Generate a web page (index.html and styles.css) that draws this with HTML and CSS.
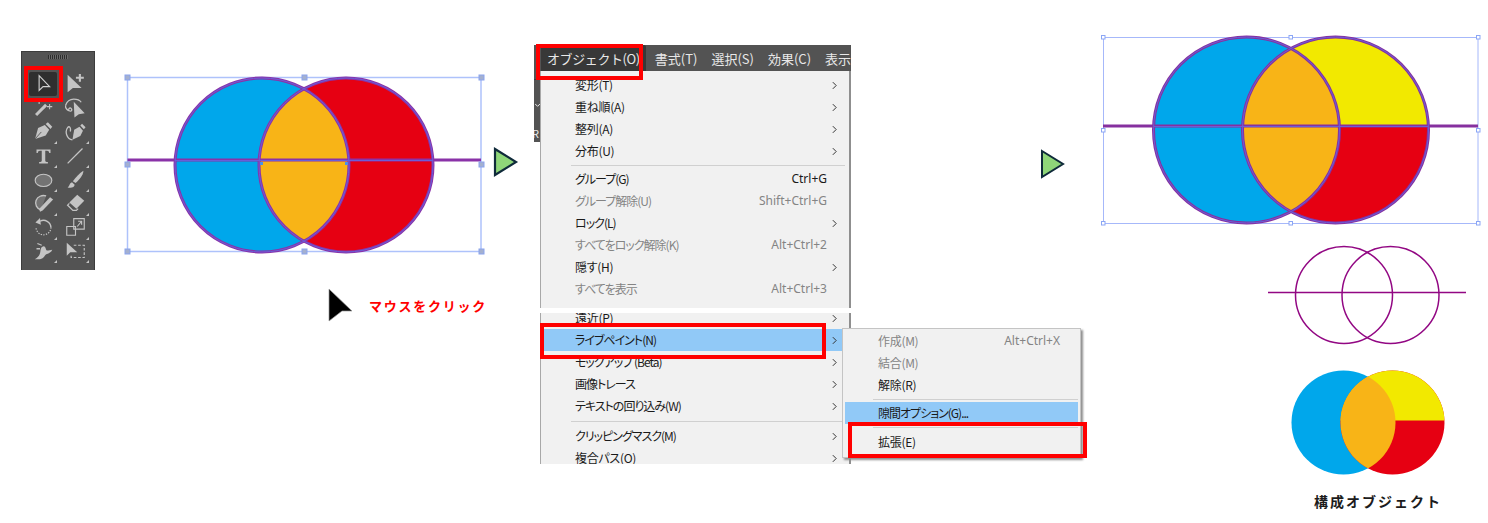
FILE: index.html
```html
<!DOCTYPE html>
<html lang="ja">
<head>
<meta charset="utf-8">
<title>ライブペイント 拡張</title>
<link rel="stylesheet" href="styles.css">
</head>
<body>
<main class="stage">

  <!-- Tools panel -->
  <section class="tools">
    <div class="grip"></div>
    <div class="tool-grid">
      <div class="tool tool-on"><svg viewBox="0 0 24 24"><path d="M7 3v17l4.500-4.500h7.500z" fill="none" stroke="#d0d0d0" stroke-width="1.300"/></svg></div>
      <div class="tool"><svg viewBox="0 0 24 24"><path d="M3 2v20l6-5h10z" fill="#c4c4c4"/><path d="M17 1v9M12.500 5.500h9" stroke="#c4c4c4" stroke-width="2.400"/></svg></div>
      <div class="tool"><svg viewBox="0 0 24 24"><path d="M3.500 20.500L15 9" stroke="#c4c4c4" stroke-width="3.400"/><path d="M7 2v6M4 5h6M19 8v6M16 11h6" stroke="#c4c4c4" stroke-width="1.200"/></svg></div>
      <div class="tool"><svg viewBox="0 0 24 24"><path d="M10 5.500L22.500 18.500l-6.700 1.200-5 3.800z" fill="#c4c4c4"/><path d="M.5 10C2 5 6 2.400 10 2.400s7 1.300 8.500 3.600" fill="none" stroke="#c4c4c4" stroke-width="1.500"/><path d="M.5 10c0 3 2 5 5 6 2 .7 3-1.500 1.500-3-1-1-3-.2-2.500 1.500" fill="none" stroke="#c4c4c4" stroke-width="1.500"/></svg></div>
      <div class="tool corner"><svg viewBox="0 0 24 24"><path d="M2.400 20.500L5.800 8l7.700-3.500 5 5.500-4 6.500z" fill="#c4c4c4"/><path d="M14.500 3.500L17 1.500l5 5-2 2.500z" fill="#c4c4c4"/><path d="M2.400 20.500L9.500 12.500" stroke="#535353" stroke-width="1"/></svg></div>
      <div class="tool corner"><svg viewBox="0 0 24 24"><path d="M8.500 21.500L10.500 10l6-3.500 4 4.500-3 6z" fill="#c4c4c4"/><path d="M17.500 5L19.500 3 23.500 7l-2 2.500z" fill="#c4c4c4"/><path d="M8.500 21.500C2 21 -.5 12 3 7.500 5 5 7 8 6 12" fill="none" stroke="#c4c4c4" stroke-width="1.500"/></svg></div>
      <div class="tool corner"><svg viewBox="0 0 24 24"><path d="M4 5h16v4h-1.500c0-2-1-2.500-4.500-2.500V18c0 1 1 1.500 3 1.500V21H7v-1.500c2 0 3-.5 3-1.500V6.500c-3.500 0-4.500.5-4.500 2.500H4z" fill="#c4c4c4"/></svg></div>
      <div class="tool corner"><svg viewBox="0 0 24 24"><path d="M3 21L20 4" stroke="#c4c4c4" stroke-width="1.500"/></svg></div>
      <div class="tool corner"><svg viewBox="0 0 24 24"><ellipse cx="12" cy="13" rx="9.500" ry="7" fill="#737373" stroke="#c4c4c4" stroke-width="1.300"/></svg></div>
      <div class="tool corner"><svg viewBox="0 0 24 24"><path d="M21 2c0 5-5 11-9 14l-3-2C12 10 16 5 21 2z" fill="#c4c4c4"/><path d="M8 15l3 3c0 3-4 4-8 3 2-1 2-5 5-6z" fill="#c4c4c4"/></svg></div>
      <div class="tool corner"><svg viewBox="0 0 24 24"><path d="M9 20.500A8.500 8 0 1 1 15 4.500" fill="#737373" stroke="#c4c4c4" stroke-width="1.500"/><path d="M23 8.500L11 21l-3 1.500-1-3L19.500 6z" fill="#c4c4c4"/></svg></div>
      <div class="tool corner"><svg viewBox="0 0 24 24"><path d="M14 3l8 7-9 9-8-7z" fill="#c4c4c4"/><path d="M5 13l-2 2 6 6h4l2-2" fill="none" stroke="#c4c4c4" stroke-width="1.500"/></svg></div>
      <div class="tool corner"><svg viewBox="0 0 24 24"><path d="M8 6A8.500 8.500 0 0 1 20.500 13" fill="none" stroke="#c4c4c4" stroke-width="1.600"/><path d="M20.500 13A8.500 8.500 0 1 1 3.500 13" fill="none" stroke="#c4c4c4" stroke-width="1.400" stroke-dasharray="1.500 1.500"/><path d="M8 2.400L2.800 7.400 9 10z" fill="#c4c4c4"/></svg></div>
      <div class="tool corner"><svg viewBox="0 0 24 24"><path d="M10 3h12v12H10zM2 12h10v10H2z" fill="none" stroke="#c4c4c4" stroke-width="1.300"/><path d="M14 12l5-6M15 6h4v4" fill="none" stroke="#c4c4c4" stroke-width="1.300"/></svg></div>
      <div class="tool corner"><svg viewBox="0 0 24 24"><path d="M2 22c3-2 5-3 6-7 1-3 0-7 4-8 3 0 2 4 4 5 2 0 4-1 6-1-1 3-4 4-6 5-3 1-3 5-8 6z" fill="#c4c4c4"/><path d="M5 4l5 2M4 10h4" stroke="#c4c4c4" stroke-width="1.500"/></svg></div>
      <div class="tool corner"><svg viewBox="0 0 24 24"><path d="M2 3v15l4-4h8z" fill="#c4c4c4"/><path d="M10 6h12v14H7v-4" fill="none" stroke="#c4c4c4" stroke-width="1.300" stroke-dasharray="3 2"/></svg></div>
    </div>
  </section>
  <div class="mark mark-tool"></div>

  <!-- Selected artwork -->
  <svg class="art art-one" viewBox="120 70 370 190">
    <defs>
      <clipPath id="oneL"><circle cx="262" cy="165" r="87"/></clipPath>
    </defs>
    <rect x="127.500" y="77.500" width="353.500" height="174" fill="none" stroke="#aec2fb" stroke-width="1.500"/>
    <circle cx="262" cy="165" r="87" fill="#00a7eb"/>
    <circle cx="346" cy="165" r="87" fill="#e60012"/>
    <circle cx="346" cy="165" r="87" fill="#f8b417" clip-path="url(#oneL)"/>
    <g fill="none" stroke="#8a32a8" stroke-width="3">
      <circle cx="262" cy="165" r="87"/><circle cx="346" cy="165" r="87"/>
      <path d="M127.500 160H481"/>
    </g>
    <g fill="none" stroke="#6a5ed8" stroke-width="1">
      <circle cx="262" cy="165" r="87"/><circle cx="346" cy="165" r="87"/>
      <path d="M175 160.500H433"/>
    </g>
    <g fill="#a4b0cf" stroke="#8aa4ee" stroke-width="1">
      <rect x="125" y="75" width="5" height="5"/><rect x="302" y="75" width="5" height="5"/><rect x="479" y="75" width="5" height="5"/>
      <rect x="125" y="162" width="5" height="5"/><rect x="479" y="162" width="5" height="5"/>
      <rect x="125" y="249" width="5" height="5"/><rect x="302" y="249" width="5" height="5"/><rect x="479" y="249" width="5" height="5"/>
    </g>
    <rect x="260" y="162" width="3" height="3" fill="#4a90ea"/>
    <rect x="345" y="162" width="3" height="3" fill="#4a90ea"/>
  </svg>

  <svg class="art art-cursor" viewBox="0 0 25 34"><path d="M1 1l23 22h-10l-13 10z" fill="#000" stroke="#9a9a9a" stroke-width=".7"/></svg>
  <p class="click-label">マウスをクリック</p>

  <svg class="art art-arrow-a" viewBox="0 0 26 32"><path d="M2 3l21 13L2 29z" fill="#8fd679" stroke="#0f2a3a" stroke-width="2.200"/></svg>

  <!-- Application menu -->
  <section class="app">
    <nav class="menubar">
      <span class="menubar-item menubar-on">オブジェクト(O)</span>
      <span class="menubar-item">書式(T)</span>
      <span class="menubar-item">選択(S)</span>
      <span class="menubar-item">効果(C)</span>
      <span class="menubar-item">表示</span>
    </nav>
    <div class="app-body">
      <span class="app-line"></span>
      <svg class="app-check" viewBox="0 0 7 6"><path d="M0 1l3 3 3-3"/></svg>
      <span class="app-glyph">R</span>
    </div>
  </section>

  <div class="menu">
    <div class="panel panel-top">
      <div class="row"><span class="label">変形(T)</span><span class="more"><svg viewBox="0 0 6 10"><path d="M1 1l4 4-4 4"/></svg></span></div>
      <div class="row"><span class="label">重ね順(A)</span><span class="more"><svg viewBox="0 0 6 10"><path d="M1 1l4 4-4 4"/></svg></span></div>
      <div class="row"><span class="label">整列(A)</span><span class="more"><svg viewBox="0 0 6 10"><path d="M1 1l4 4-4 4"/></svg></span></div>
      <div class="row"><span class="label">分布(U)</span><span class="more"><svg viewBox="0 0 6 10"><path d="M1 1l4 4-4 4"/></svg></span></div>
      <div class="sep"></div>
      <div class="row kana"><span class="label">グループ(G)</span><span class="key">Ctrl+G</span><span class="more"></span></div>
      <div class="row kana off"><span class="label">グループ解除(U)</span><span class="key">Shift+Ctrl+G</span><span class="more"></span></div>
      <div class="row kana"><span class="label">ロック(L)</span><span class="more"><svg viewBox="0 0 6 10"><path d="M1 1l4 4-4 4"/></svg></span></div>
      <div class="row kana off"><span class="label">すべてをロック解除(K)</span><span class="key">Alt+Ctrl+2</span><span class="more"></span></div>
      <div class="row"><span class="label">隠す(H)</span><span class="more"><svg viewBox="0 0 6 10"><path d="M1 1l4 4-4 4"/></svg></span></div>
      <div class="row kana off"><span class="label">すべてを表示</span><span class="key">Alt+Ctrl+3</span><span class="more"></span></div>
    </div>
    <div class="panel panel-bottom">
      <div class="row"><span class="label">遠近(P)</span><span class="more"><svg viewBox="0 0 6 10"><path d="M1 1l4 4-4 4"/></svg></span></div>
      <div class="row kana hot"><span class="label">ライブペイント(N)</span><span class="more"><svg viewBox="0 0 6 10"><path d="M1 1l4 4-4 4"/></svg></span></div>
      <div class="row kana"><span class="label">モックアップ (Beta)</span><span class="more"><svg viewBox="0 0 6 10"><path d="M1 1l4 4-4 4"/></svg></span></div>
      <div class="row kana"><span class="label">画像トレース</span><span class="more"><svg viewBox="0 0 6 10"><path d="M1 1l4 4-4 4"/></svg></span></div>
      <div class="row kana"><span class="label">テキストの回り込み(W)</span><span class="more"><svg viewBox="0 0 6 10"><path d="M1 1l4 4-4 4"/></svg></span></div>
      <div class="sep sep-wide"></div>
      <div class="row kana"><span class="label">クリッピングマスク(M)</span><span class="more"><svg viewBox="0 0 6 10"><path d="M1 1l4 4-4 4"/></svg></span></div>
      <div class="row"><span class="label">複合パス(O)</span><span class="more"><svg viewBox="0 0 6 10"><path d="M1 1l4 4-4 4"/></svg></span></div>
    </div>
  </div>

  <div class="submenu">
    <div class="row off"><span class="label">作成(M)</span><span class="key">Alt+Ctrl+X</span></div>
    <div class="row off"><span class="label">結合(M)</span></div>
    <div class="row"><span class="label">解除(R)</span></div>
    <div class="sep"></div>
    <div class="row kana hot"><span class="label">隙間オプション(G)...</span></div>
    <div class="sep sep-wide"></div>
    <div class="row"><span class="label">拡張(E)</span></div>
  </div>

  <div class="mark mark-object"></div>
  <div class="mark mark-live"></div>
  <div class="mark mark-expand"></div>

  <svg class="art art-arrow-b" viewBox="0 0 26 32"><path d="M2 3l21 13L2 29z" fill="#8fd679" stroke="#0f2a3a" stroke-width="2"/></svg>

  <!-- Result artwork -->
  <svg class="art art-two" viewBox="1095 30 390 200">
    <defs>
      <clipPath id="twoL"><circle cx="1246.500" cy="130" r="93"/></clipPath>
      <clipPath id="twoTop"><rect x="1095" y="30" width="390" height="96"/></clipPath>
    </defs>
    <rect x="1103.500" y="37.500" width="374.500" height="186" fill="none" stroke="#a6b8fa" stroke-width="1"/>
    <circle cx="1246.500" cy="130" r="93" fill="#00a7eb"/>
    <circle cx="1335.500" cy="130" r="93" fill="#e60012"/>
    <circle cx="1335.500" cy="130" r="93" fill="#f2e900" clip-path="url(#twoTop)"/>
    <circle cx="1335.500" cy="130" r="93" fill="#f8b417" clip-path="url(#twoL)"/>
    <g fill="none" stroke="#86309f" stroke-width="3">
      <circle cx="1246.500" cy="130" r="93"/><circle cx="1335.500" cy="130" r="93"/>
      <path d="M1103 126H1478"/>
    </g>
    <g fill="none" stroke="#6a5ed8" stroke-width="1">
      <circle cx="1246.500" cy="130" r="93"/><circle cx="1335.500" cy="130" r="93"/>
      <path d="M1154 126.500H1428"/>
    </g>
    <g fill="#fff" stroke="#8ba6f5" stroke-width="1">
      <rect x="1101.500" y="35.500" width="3.500" height="3.500"/><rect x="1289" y="35.500" width="3.500" height="3.500"/><rect x="1476.500" y="35.500" width="3.500" height="3.500"/>
      <rect x="1101.500" y="128.500" width="3.500" height="3.500"/><rect x="1476.500" y="128.500" width="3.500" height="3.500"/>
      <rect x="1101.500" y="221.500" width="3.500" height="3.500"/><rect x="1289" y="221.500" width="3.500" height="3.500"/><rect x="1476.500" y="221.500" width="3.500" height="3.500"/>
    </g>
  </svg>

  <svg class="art art-lines" viewBox="1260 240 215 110">
    <g fill="none" stroke="#920783" stroke-width="1.500">
      <circle cx="1344" cy="295" r="48.500"/><circle cx="1390.500" cy="295" r="48.500"/>
      <path d="M1268 292.500H1466"/>
    </g>
  </svg>

  <svg class="art art-fills" viewBox="1285 365 165 115">
    <defs>
      <clipPath id="fillL"><circle cx="1343.500" cy="422.500" r="52"/></clipPath>
      <clipPath id="fillTop"><rect x="1285" y="365" width="165" height="55.500"/></clipPath>
    </defs>
    <circle cx="1343.500" cy="422.500" r="52" fill="#00a7eb"/>
    <circle cx="1392.500" cy="422.500" r="52" fill="#e60012"/>
    <circle cx="1392.500" cy="422.500" r="52" fill="#f2e900" clip-path="url(#fillTop)"/>
    <circle cx="1392.500" cy="422.500" r="52" fill="#f8b417" clip-path="url(#fillL)"/>
  </svg>

  <p class="parts-label">構成オブジェクト</p>
</main>
</body>
</html>
```

FILE: styles.css
```css
* { box-sizing: border-box; }

html, body {
  margin: 0;
  padding: 0;
  background: #fff;
}

.stage {
  position: relative;
  width: 1488px;
  height: 523px;
  overflow: hidden;
  font-family: "Noto Sans CJK JP", "Noto Sans", sans-serif;
}

.art {
  position: absolute;
  display: block;
}

.art-one { left: 120px; top: 70px; width: 370px; height: 190px; }
.art-two { left: 1095px; top: 30px; width: 390px; height: 200px; }
.art-lines { left: 1260px; top: 240px; width: 215px; height: 110px; }
.art-fills { left: 1285px; top: 365px; width: 165px; height: 115px; }
.art-cursor { left: 328px; top: 288px; width: 25px; height: 34px; }
.art-arrow-a { left: 493px; top: 146px; width: 26px; height: 32px; }
.art-arrow-b { left: 1040px; top: 148px; width: 26px; height: 32px; }

.click-label {
  position: absolute;
  left: 369px;
  top: 296px;
  margin: 0;
  font-size: 13px;
  line-height: 20px;
  font-weight: 700;
  letter-spacing: 1.750px;
  color: #f00;
}

.parts-label {
  position: absolute;
  left: 1314px;
  top: 490px;
  margin: 0;
  font-size: 14px;
  line-height: 22px;
  font-weight: 700;
  letter-spacing: 2px;
  color: #1c1c1c;
}

/* Tools panel */
.tools {
  position: absolute;
  left: 21px;
  top: 51px;
  width: 74px;
  height: 219px;
  background: #535353;
  border: 1px solid #3c3c3c;
  border-bottom: 0;
  padding: 3px 0 0 6px;
  overflow: hidden;
}

.grip {
  width: 20px;
  height: 4px;
  margin: 0 0 13px 20px;
  background: repeating-linear-gradient(90deg, #2d2d2d 0 1px, #6a6a6a 1px 2px);
}

.tool-grid {
  display: grid;
  grid-template-columns: 30px 30px;
  grid-auto-rows: 23.800px;
  column-gap: 2px;
}

.tool {
  position: relative;
  display: flex;
  align-items: center;
  justify-content: center;
}

.tool svg {
  width: 21px;
  height: 21px;
  display: block;
}

.tool-on {
  background: #2f2f2f;
  border-radius: 2px;
  width: 28px;
  margin-left: 1px;
}

.corner::after {
  content: "";
  position: absolute;
  right: 1px;
  bottom: -1px;
  border-style: solid;
  border-width: 0 0 3px 3px;
  border-color: transparent transparent #c4c4c4 transparent;
}

/* Application window behind the menu */
.app {
  position: absolute;
  left: 534px;
  top: 45px;
  width: 317px;
  height: 97px;
  background: #535353;
  overflow: hidden;
}

.menubar {
  display: flex;
  height: 26px;
  padding-left: 7px;
  font-size: 13px;
  line-height: 28px;
  color: #e8e8e8;
  white-space: nowrap;
}

.menubar-item {
  padding: 0 6px;
  margin-right: 2px;
  flex: none;
}

.menubar-on {
  background: #383838;
  border-radius: 2px 2px 0 0;
  margin-right: 3px;
  letter-spacing: -.400px;
}

.app-body {
  position: relative;
  height: 71px;
}

.app-line {
  display: block;
  height: 1px;
  margin-top: 8px;
  background: #3d3d3d;
}

.app-check {
  position: absolute;
  left: 1px;
  top: 24px;
  width: 6px;
  height: 5px;
  fill: none;
  stroke: #e8e8e8;
  stroke-width: 1.200;
}

.app-glyph {
  position: absolute;
  left: -2px;
  top: 47px;
  font-size: 11px;
  line-height: 14px;
  color: #eee;
}

/* Menus */
.menu {
  position: absolute;
  left: 540px;
  top: 71px;
  width: 309px;
  display: flex;
  flex-direction: column;
  gap: 5px;
}

.panel {
  background: #f1f1f1;
  border-left: 1px solid #a8a8a8;
  box-shadow: 2px 0 0 #8f8f8f;
  overflow: hidden;
}

.panel-top { height: 237px; padding-top: 3px; }
.panel-bottom { height: 151px; }
.panel-bottom .row:first-child { margin-top: -6px; }

.row {
  display: flex;
  align-items: center;
  height: 22px;
  padding-left: 34px;
  font-size: 12px;
  line-height: 22px;
  letter-spacing: -.300px;
  color: #1a1a1a;
  white-space: nowrap;
  font-feature-settings: "palt";
}

.row.kana .label { letter-spacing: -1px; }
.row.off { color: #848484; }
.row.hot { background: #91c9f7; }

.label { flex: 1; }

.key {
  font-family: "Noto Sans", sans-serif;
  letter-spacing: 0;
  color: inherit;
}

.more {
  width: 22px;
  height: 22px;
  flex: none;
  display: flex;
  align-items: center;
  justify-content: flex-end;
  padding-right: 12px;
}

.more svg {
  width: 5px;
  height: 9px;
  display: block;
  fill: none;
  stroke: #333;
  stroke-width: 1.200;
}

.sep {
  height: 1px;
  margin: 3px 4px 2px 30px;
  background: #d0d0d0;
}

.panel .sep-wide { margin-top: 4px; margin-bottom: 3px; }

.submenu {
  position: absolute;
  left: 842px;
  top: 328px;
  width: 239px;
  height: 130px;
  padding: 1px 2px 2px;
  background: #f1f1f1;
  border: 1px solid #c4c4c4;
  box-shadow: 2px 2px 2px #8f8f8f;
}

.submenu .row {
  padding: 0 18px 0 33px;
}

.submenu .sep { margin: 3px 0 2px 28px; }
.submenu .sep-wide { margin-top: 3px; margin-bottom: 3px; }

/* Red call-out rectangles */
.mark {
  position: absolute;
  border: 4px solid #f00;
}

.mark-tool { left: 24px; top: 66px; width: 39px; height: 36px; }
.mark-object { left: 536px; top: 44px; width: 107px; height: 36px; }
.mark-live { left: 540px; top: 323px; width: 286px; height: 36px; }
.mark-expand { left: 848px; top: 422px; width: 239px; height: 36px; }
```
